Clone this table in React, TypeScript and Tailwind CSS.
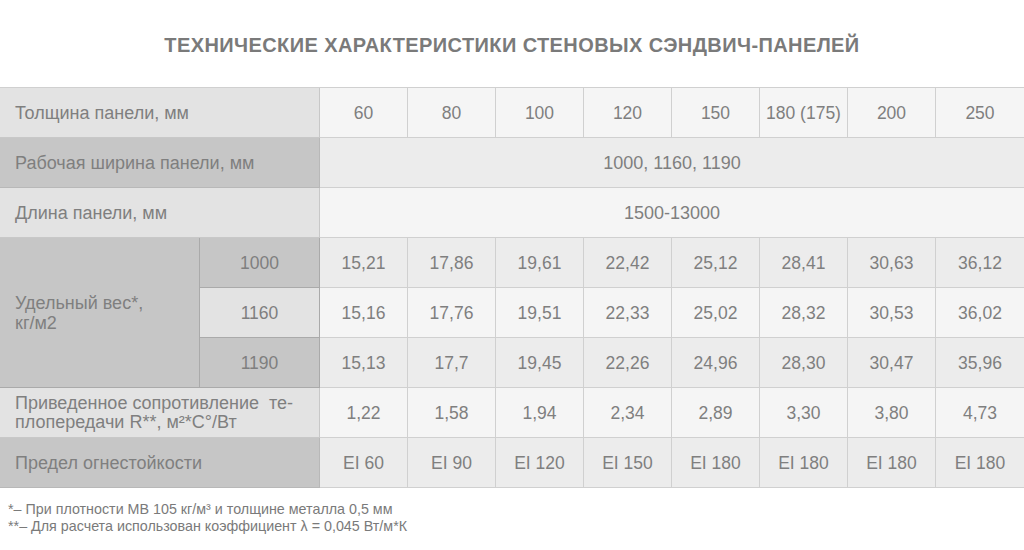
import React from "react";

const cols = ["60", "80", "100", "120", "150", "180 (175)", "200", "250"];
const w1000 = ["15,21", "17,86", "19,61", "22,42", "25,12", "28,41", "30,63", "36,12"];
const w1160 = ["15,16", "17,76", "19,51", "22,33", "25,02", "28,32", "30,53", "36,02"];
const w1190 = ["15,13", "17,7", "19,45", "22,26", "24,96", "28,30", "30,47", "35,96"];
const res = ["1,22", "1,58", "1,94", "2,34", "2,89", "3,30", "3,80", "4,73"];
const fire = ["EI 60", "EI 90", "EI 120", "EI 150", "EI 180", "EI 180", "EI 180", "EI 180"];

const LIGHT = "bg-[#e3e3e3]";
const DARK = "bg-[#c6c6c6]";

function DataRow({ vals, bg }: { vals: string[]; bg: string }) {
  return (
    <>
      {vals.map((v, i) => (
        <div
          key={i}
          className={`${bg} flex items-center justify-center text-[17.5px] pt-[1px] border-b border-[#d0d0d0] ${i < 7 ? "border-r" : ""}`}
        >
          {v}
        </div>
      ))}
    </>
  );
}

export default function App() {
  return (
    <div
      className="w-[1024px] h-[550px] bg-white text-[#7f7f7f] overflow-hidden"
      style={{ fontFamily: '"Liberation Sans", Arial, sans-serif' }}
    >
      <div className="h-[87px] flex items-center justify-center pt-[2px]">
        <h1 className="text-[20px] font-bold text-[#7a7a7a] tracking-[0.4px]">
          ТЕХНИЧЕСКИЕ ХАРАКТЕРИСТИКИ СТЕНОВЫХ СЭНДВИЧ-ПАНЕЛЕЙ
        </h1>
      </div>
      <div className="grid grid-cols-[200px_120px_repeat(8,88px)] grid-rows-[repeat(8,50px)] border-t border-[#d0d0d0] text-[18px]">
        {/* row 1 */}
        <div className={`${LIGHT} col-span-2 flex items-center pl-[15px] pt-[2px] border-b border-r border-[#c8c8c8]`}>
          Толщина панели, мм
        </div>
        <DataRow vals={cols} bg="bg-[#f5f5f5]" />
        {/* row 2 */}
        <div className={`${DARK} col-span-2 flex items-center pl-[15px] pt-[2px] border-b border-r border-[#b8b8b8]`}>
          Рабочая ширина панели, мм
        </div>
        <div className="bg-[#ececec] col-span-8 flex items-center justify-center text-[18px] pt-[1px] border-b border-[#d0d0d0]">
          1000, 1160, 1190
        </div>
        {/* row 3 */}
        <div className={`${LIGHT} col-span-2 flex items-center pl-[15px] pt-[2px] border-b border-r border-[#c8c8c8]`}>
          Длина панели, мм
        </div>
        <div className="bg-[#f5f5f5] col-span-8 flex items-center justify-center text-[18px] pt-[1px] border-b border-[#d0d0d0]">
          1500-13000
        </div>
        {/* weight rows */}
        <div className={`${DARK} row-span-3 flex items-center pl-[15px] leading-[20px] border-b border-r border-[#aaaaaa]`}>
          <span>
            Удельный вес*,
            <br />
            кг/м2
          </span>
        </div>
        <div className={`${DARK} flex items-center justify-center text-[17.5px] pt-[1px] border-b border-r border-[#aaaaaa]`}>1000</div>
        <DataRow vals={w1000} bg="bg-[#ececec]" />
        <div className={`${LIGHT} flex items-center justify-center text-[17.5px] pt-[1px] border-b border-r border-[#aaaaaa]`}>1160</div>
        <DataRow vals={w1160} bg="bg-[#f5f5f5]" />
        <div className={`${DARK} flex items-center justify-center text-[17.5px] pt-[1px] border-b border-r border-[#aaaaaa]`}>1190</div>
        <DataRow vals={w1190} bg="bg-[#ececec]" />
        {/* resistance */}
        <div className={`${LIGHT} col-span-2 flex items-center pl-[15px] leading-[19px] border-b border-r border-[#c8c8c8]`}>
          <span>
            Приведенное сопротивление&nbsp; те-
            <br />
            плопередачи R**, м²*С°/Вт
          </span>
        </div>
        <DataRow vals={res} bg="bg-[#f5f5f5]" />
        {/* fire */}
        <div className={`${DARK} col-span-2 flex items-center pl-[15px] pt-[2px] border-b border-r border-[#b8b8b8]`}>
          Предел огнестойкости
        </div>
        <DataRow vals={fire} bg="bg-[#ececec]" />
      </div>
      <div className="pt-[13px] pl-[8px] text-[14.3px] leading-[17px] text-[#7a7a7a]">
        <div>*– При плотности МВ 105 кг/м³ и толщине металла 0,5 мм</div>
        <div>**– Для расчета использован коэффициент λ = 0,045 Вт/м*К</div>
      </div>
    </div>
  );
}
